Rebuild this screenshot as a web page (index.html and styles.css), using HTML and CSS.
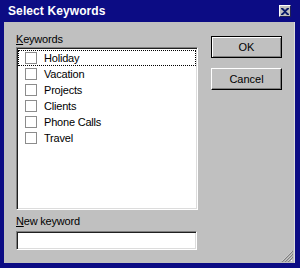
FILE: index.html
```html
<!DOCTYPE html>
<html>
<head>
<meta charset="utf-8">
<link rel="stylesheet" href="styles.css">
</head>
<body>
<div class="window">
  <div class="titlebar">
    <span class="title">Select Keywords</span>
    <span class="close"><svg width="8" height="7" viewBox="0 0 8 7"><path d="M0 0h2l2 2 2-2h2v1L5 3.5 8 6v1H6L4 5 2 7H0V6l3-2.5L0 1z" fill="#0a1a6a"/></svg></span>
  </div>
  <div class="client">
    <div class="leftcol">
      <div class="label"><u>K</u>eywords</div>
      <div class="listbox">
        <div class="item focus"><span class="check"></span><span>Holiday</span></div>
        <div class="item"><span class="check"></span><span>Vacation</span></div>
        <div class="item"><span class="check"></span><span>Projects</span></div>
        <div class="item"><span class="check"></span><span>Clients</span></div>
        <div class="item"><span class="check"></span><span>Phone Calls</span></div>
        <div class="item"><span class="check"></span><span>Travel</span></div>
      </div>
      <div class="label label2"><u>N</u>ew keyword</div>
      <div class="field"></div>
    </div>
    <div class="rightcol">
      <div class="btn default"><span>OK</span></div>
      <div class="btn"><span>Cancel</span></div>
    </div>
    <div class="grip"><svg width="12" height="12" viewBox="0 0 12 12"><path d="M11 1L1 11M11 4L4 11M11 7L7 11M11 10L10 11" stroke="#fff" stroke-width="1"/><path d="M12 1L1 12M12 4L4 12M12 7L7 12" stroke="#808080" stroke-width="1.2"/></svg></div>
  </div>
</div>
</body>
</html>
```
FILE: styles.css
```css
html, body { margin: 0; padding: 0; }
body {
  width: 300px;
  height: 268px;
  overflow: hidden;
  background: #c0c0c0;
  font-family: "Liberation Sans", Arial, sans-serif;
}
.window {
  width: 300px;
  height: 268px;
  box-sizing: border-box;
  background: #0c0c84;
  display: flex;
  flex-direction: column;
}
.titlebar {
  height: 22px;
  flex: none;
  display: flex;
  align-items: center;
  padding: 0 8px 0 8px;
  position: relative;
}
.title {
  color: #fff;
  font-weight: bold;
  font-size: 12px;
  letter-spacing: 0.1px;
  margin-top: -1px;
}
.close {
  position: absolute;
  left: 279px;
  top: 5px;
  width: 12px;
  height: 12px;
  box-sizing: border-box;
  background: #c0c0c0;
  border-top: 1px solid #fff;
  border-left: 1px solid #fff;
  border-right: 1px solid #202050;
  border-bottom: 1px solid #202050;
  display: flex;
  align-items: center;
  justify-content: center;
}
.client {
  flex: none;
  height: 241px;
  margin: 0 5px 0 4px;
  background: #c0c0c0;
  border-right: 1px solid #dcdcdc;
  box-sizing: border-box;
  display: flex;
  padding: 10px 0 0 12px;
  position: relative;
  font-size: 11px;
  color: #000;
}
.leftcol {
  width: 182px;
  display: flex;
  flex-direction: column;
}
.label {
  height: 15px;
  line-height: 15px;
  letter-spacing: -0.2px;
}
.label u { text-decoration: underline; text-underline-offset: 1px; }
.listbox {
  height: 163px;
  box-sizing: border-box;
  background: #fff;
  border-top: 1px solid #808080;
  border-left: 1px solid #808080;
  border-right: 1px solid #fff;
  border-bottom: 1px solid #fff;
  box-shadow: inset 1px 1px 0 #202020, inset -1px -1px 0 #dcdcdc;
  padding: 2px 1px 0 1px;
}
.item {
  height: 16px;
  box-sizing: border-box;
  display: flex;
  align-items: center;
  padding-left: 6px;
  letter-spacing: -0.2px;
  border: 1px solid transparent;
}
.item.focus {
  border: 1px dotted #000;
}
.check {
  width: 12px;
  height: 12px;
  box-sizing: border-box;
  border: 1px solid #8c8c8c;
  background: #fff;
  margin-right: 7px;
  flex: none;
}
.label2 {
  margin-top: 4px;
}
.field {
  margin-top: 2px;
  width: 181px;
  height: 19px;
  box-sizing: border-box;
  background: #fff;
  border-top: 1px solid #808080;
  border-left: 1px solid #808080;
  border-right: 1px solid #fff;
  border-bottom: 1px solid #fff;
  box-shadow: inset 1px 1px 0 #202020, inset -1px -1px 0 #dcdcdc;
}
.rightcol {
  margin-left: 13px;
  margin-top: 4px;
  display: flex;
  flex-direction: column;
  gap: 10px;
}
.btn {
  width: 71px;
  height: 22px;
  box-sizing: border-box;
  background: #c0c0c0;
  border-top: 1px solid #fff;
  border-left: 1px solid #fff;
  border-right: 1px solid #000;
  border-bottom: 1px solid #000;
  box-shadow: inset -1px -1px 0 #808080;
  display: flex;
  align-items: center;
  justify-content: center;
  font-size: 11px;
}
.btn.default {
  border: 1px solid #000;
  box-shadow: inset 1px 1px 0 #fff, inset -1px -1px 0 #808080;
}
.grip {
  position: absolute;
  right: 1px;
  bottom: 1px;
  width: 12px;
  height: 12px;
}
```
